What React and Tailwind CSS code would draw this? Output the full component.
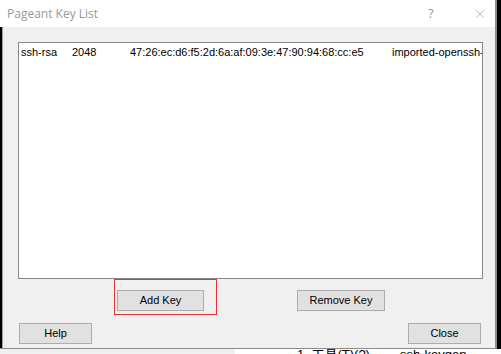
import { X } from 'lucide-react'

const ui = { fontFamily: '"Liberation Sans", Arial, sans-serif' }

function Btn({ children, className = '' }) {
  return (
    <div
      className={`h-[21px] flex items-center justify-center bg-[#e1e1e1] border border-[#adadad] text-[11px] text-black ${className}`}
      style={ui}
    >
      {children}
    </div>
  )
}

export default function App() {
  return (
    <div className="w-[501px] h-[354px] bg-black overflow-hidden flex flex-col">
      <div className="flex h-[349px]">
        {/* Dialog */}
        <div className="w-[497px] h-[349px] flex flex-col border-r-2 border-b border-[#8a8a8a]">
          {/* Title bar */}
          <div className="h-[27px] bg-white flex items-center pl-[7px] shrink-0">
            <span
              className="text-[12px] text-[#999999] flex-1 pt-[1px]"
              style={{ fontFamily: '"Open Sans", "Liberation Sans", sans-serif' }}
            >
              Pageant Key List
            </span>
            <span
              className="text-[13px] text-[#9a9a9a] w-[10px] mr-[35px]"
              style={{ fontFamily: '"Open Sans", sans-serif' }}
            >
              ?
            </span>
            <X size={14} strokeWidth={1} className="text-[#8a8a8a] mr-[8px]" />
          </div>

          {/* Body */}
          <div className="flex-1 bg-[#f0f0f0] ml-[2px] border-l border-[#a0a0a0] pl-[15px] pt-[15px] flex flex-col">
            {/* Key list */}
            <div
              className="w-[465px] h-[237px] bg-white border border-[#828790] overflow-hidden text-[11px] text-black"
              style={ui}
            >
              <div className="flex whitespace-nowrap pl-[2px] pt-[2px] leading-[14px]">
                <span className="w-[51px] shrink-0">ssh-rsa</span>
                <span className="w-[58px] shrink-0">2048</span>
                <span className="w-[262px] shrink-0">47:26:ec:d6:f5:2d:6a:af:09:3e:47:90:94:68:cc:e5</span>
                <span className="shrink-0">imported-openssh-key</span>
              </div>
            </div>

            {/* Middle buttons */}
            <div className="flex items-start">
              <div className="ml-[96px] border border-[#e8333a] pt-[10px] pl-[2px] pr-[12px] pb-[3px]">
                <Btn className="w-[87px]">Add Key</Btn>
              </div>
              <Btn className="w-[88px] ml-[80px] mt-[11px]">Remove Key</Btn>
            </div>

            {/* Bottom buttons */}
            <div className="flex mt-[8px] pl-[1px] pr-[14px] justify-between">
              <Btn className="w-[73px]">Help</Btn>
              <Btn className="w-[73px]">Close</Btn>
            </div>
          </div>
        </div>
        {/* Background window strip */}
        <div className="flex-1 bg-black" />
      </div>

      {/* Background behind the dialog, bottom */}
      <div className="h-[5px] flex overflow-hidden">
        <div className="w-[235px] bg-[#f0f0f0]" />
        <div className="flex-1 bg-white relative overflow-hidden">
          <div
            className="flex gap-[30px] pl-[62px] text-[13px] leading-[13px] text-black whitespace-nowrap -mt-[1px]"
            style={{ fontFamily: '"Liberation Sans", "Noto Sans CJK SC", sans-serif' }}
          >
            <span>1. 工具(T)(?)</span>
            <span>ssh-keygen</span>
          </div>
        </div>
      </div>
    </div>
  )
}
